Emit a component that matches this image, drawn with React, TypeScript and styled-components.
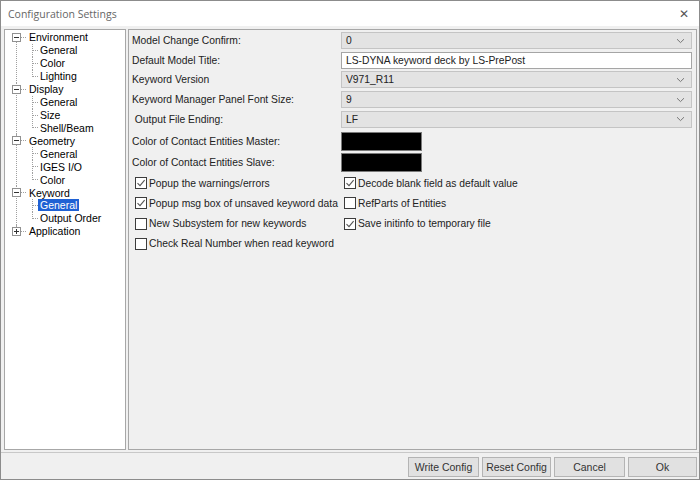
import React from 'react';
import styled, { createGlobalStyle, css } from 'styled-components';

const GlobalStyle = createGlobalStyle`
  html, body { margin: 0; padding: 0; background: #ffffff; }
  body { font-family: "Liberation Sans", Arial, sans-serif; font-size: 10.3px; color: #000; }
  * { box-sizing: border-box; }
`;

type TreeNode = { label: string; expanded: boolean; children: string[]; selected?: string };

const TREE: TreeNode[] = [
  { label: 'Environment', expanded: true, children: ['General', 'Color', 'Lighting'] },
  { label: 'Display', expanded: true, children: ['General', 'Size', 'Shell/Beam'] },
  { label: 'Geometry', expanded: true, children: ['General', 'IGES I/O', 'Color'] },
  { label: 'Keyword', expanded: true, children: ['General', 'Output Order'], selected: 'General' },
  { label: 'Application', expanded: false, children: [] },
];

const COMBOS = [
  { label: 'Model Change Confirm:', value: '0', kind: 'combo' },
  { label: 'Default Model Title:', value: 'LS-DYNA keyword deck by LS-PrePost', kind: 'text' },
  { label: 'Keyword Version', value: 'V971_R11', kind: 'combo' },
  { label: 'Keyword Manager Panel Font Size:', value: '9', kind: 'combo' },
  { label: ' Output File Ending:', value: 'LF', kind: 'combo' },
];

const CHECKS: { label: string; checked: boolean }[][] = [
  [
    { label: 'Popup the warnings/errors', checked: true },
    { label: 'Decode blank field as default value', checked: true },
  ],
  [
    { label: 'Popup msg box of unsaved keyword data', checked: true },
    { label: 'RefParts of Entities', checked: false },
  ],
  [
    { label: 'New Subsystem for new keywords', checked: false },
    { label: 'Save initinfo to temporary file', checked: true },
  ],
  [{ label: 'Check Real Number when read keyword', checked: false }],
];

const Window = styled.div`
  width: 700px;
  height: 480px;
  display: flex;
  flex-direction: column;
  border: 1px solid #8c8c8c;
  background: #f0f0f0;
  overflow: hidden;
`;

const TitleBar = styled.div`
  height: 25px;
  flex: none;
  background: #ffffff;
  display: flex;
  align-items: center;
  justify-content: space-between;
  padding: 0 8px 0 7px;
  font-family: "Open Sans", "Noto Sans", sans-serif;
  font-size: 10.5px;
  color: #666;
`;

const CloseGlyph = styled.span`
  font-size: 12px;
  color: #555;
  margin-right: 2px;
`;

const Body = styled.div`
  flex: 1;
  display: flex;
  gap: 2px;
  padding: 3px 2px 0 3px;
`;

const TreePanel = styled.div`
  width: 122px;
  height: 421px;
  background: #ffffff;
  border: 1px solid #a7a7a7;
  padding-top: 1px;
`;

const RootNode = styled.div<{ $first: boolean; $last: boolean }>`
  position: relative;
  &::before {
    content: '';
    position: absolute;
    left: 11px;
    top: ${(p) => (p.$first ? '6px' : '0')};
    ${(p) =>
      p.$last
        ? css`height: 6px;`
        : css`bottom: 0;`}
    border-left: 1px dotted #a0a0a0;
  }
`;

const RootRow = styled.div`
  height: 12.93px;
  display: flex;
  align-items: center;
  padding-left: 7px;
  position: relative;
`;

const Expander = styled.span`
  width: 9px;
  height: 9px;
  border: 1px solid #919191;
  background: #fff;
  position: relative;
  z-index: 1;
  flex: none;
  display: flex;
  align-items: center;
  justify-content: center;
`;

const Dash = styled.span`
  width: 5px;
  border-top: 1px dotted #a0a0a0;
  margin: 0 1px 0 0;
`;

const TreeText = styled.span<{ $selected?: boolean }>`
  line-height: 12px;
  padding: 0 2px;
  white-space: nowrap;
  font-size: 10.5px;
  ${(p) =>
    p.$selected &&
    css`
      background: #1f61d4;
      color: #fff;
    `}
`;

const ChildRow = styled.div<{ $last: boolean }>`
  height: 12.93px;
  display: flex;
  align-items: center;
  padding-left: 33px;
  position: relative;
  &::before {
    content: '';
    position: absolute;
    left: 27px;
    top: 0;
    height: ${(p) => (p.$last ? '7px' : '13px')};
    border-left: 1px dotted #a0a0a0;
  }
  &::after {
    content: '';
    position: absolute;
    left: 28px;
    top: 6px;
    width: 5px;
    border-top: 1px dotted #a0a0a0;
  }
`;

const SettingsPanel = styled.div`
  flex: 1;
  height: 421px;
  border: 1px solid #a7a7a7;
  padding: 2px 4px 0 3px;
  color: #222;
`;

const FormGrid = styled.div`
  display: grid;
  grid-template-columns: 209px 1fr;
  grid-auto-rows: 17.2px;
  row-gap: 2.5px;
  align-items: center;
`;

const Label = styled.span`
  white-space: pre;
`;

const Field = styled.div<{ $editable: boolean }>`
  height: 17px;
  display: flex;
  align-items: center;
  justify-content: space-between;
  padding: 0 6px 0 4px;
  border: 1px solid ${(p) => (p.$editable ? '#a5a5a5' : '#c4c4c4')};
  background: ${(p) => (p.$editable ? '#ffffff' : '#e3e3e3')};
  color: #222;
`;

const ColorGrid = styled.div`
  display: grid;
  grid-template-columns: 209px 1fr;
  grid-auto-rows: 19px;
  row-gap: 2px;
  align-items: center;
  margin-top: 4px;
`;

const Swatch = styled.div<{ $color: string }>`
  width: 81px;
  height: 19px;
  background: ${(p) => p.$color};
  border: 1px solid #7a7a7a;
`;

const CheckGrid = styled.div`
  display: grid;
  grid-template-columns: 209px 1fr;
  grid-auto-rows: 20.3px;
  align-items: center;
  margin-top: 1px;
  padding-left: 3px;
`;

const CheckItem = styled.label`
  display: flex;
  align-items: center;
  gap: 2px;
  white-space: nowrap;
`;

const Box = styled.span`
  width: 12px;
  height: 12px;
  border: 1px solid #3c3c3c;
  background: #fff;
  display: flex;
  align-items: center;
  justify-content: center;
  flex: none;
`;

const Footer = styled.div`
  height: 29px;
  flex: none;
  margin-top: 2px;
  border-top: 1px solid #c8c8c8;
  display: flex;
  justify-content: flex-end;
  align-items: center;
  gap: 3px;
  padding: 0 2px 0 0;
`;

const Button = styled.button<{ $width: number }>`
  width: ${(p) => p.$width}px;
  height: 20px;
  border: 1px solid #b4b4b4;
  background: #e1e1e1;
  font-family: "Liberation Sans", Arial, sans-serif;
  font-size: 10.5px;
  color: #333;
  padding: 0;
`;

const Check = ({ checked }: { checked: boolean }) => (
  <Box>
    {checked && (
      <svg width="10" height="10" viewBox="0 0 10 10">
        <path d="M1.5 5.2 L4 7.6 L8.6 2.2" fill="none" stroke="#555" strokeWidth="1.1" />
      </svg>
    )}
  </Box>
);

const Chevron = () => (
  <svg width="9" height="6" viewBox="0 0 9 6">
    <path d="M1 1.2 L4.5 4.6 L8 1.2" fill="none" stroke="#777" strokeWidth="1" />
  </svg>
);

const ExpandIcon = ({ expanded }: { expanded: boolean }) => (
  <Expander>
    <svg width="7" height="7" viewBox="0 0 7 7">
      <path d="M1 3.5 H6" stroke="#333" strokeWidth="1" />
      {!expanded && <path d="M3.5 1 V6" stroke="#333" strokeWidth="1" />}
    </svg>
  </Expander>
);

const App = () => {
  return (
    <>
      <GlobalStyle />
      <Window>
        <TitleBar>
          <span>Configuration Settings</span>
          <CloseGlyph>✕</CloseGlyph>
        </TitleBar>
        <Body>
          <TreePanel>
            {TREE.map((node, i) => (
              <RootNode key={node.label} $first={i === 0} $last={i === TREE.length - 1}>
                <RootRow>
                  <ExpandIcon expanded={node.expanded} />
                  <Dash />
                  <TreeText>{node.label}</TreeText>
                </RootRow>
                {node.children.map((child, j) => (
                  <ChildRow key={child} $last={j === node.children.length - 1}>
                    <TreeText $selected={node.selected === child}>{child}</TreeText>
                  </ChildRow>
                ))}
              </RootNode>
            ))}
          </TreePanel>
          <SettingsPanel>
            <FormGrid>
              {COMBOS.map((row) => (
                <React.Fragment key={row.label}>
                  <Label>{row.label}</Label>
                  <Field $editable={row.kind === 'text'}>
                    <span>{row.value}</span>
                    {row.kind === 'combo' && <Chevron />}
                  </Field>
                </React.Fragment>
              ))}
            </FormGrid>
            <ColorGrid>
              <Label>Color of Contact Entities Master:</Label>
              <Swatch $color="#000000" />
              <Label>Color of Contact Entities Slave:</Label>
              <Swatch $color="#000000" />
            </ColorGrid>
            <CheckGrid>
              {CHECKS.flat().map((c) => (
                <CheckItem key={c.label}>
                  <Check checked={c.checked} />
                  <span>{c.label}</span>
                </CheckItem>
              ))}
            </CheckGrid>
          </SettingsPanel>
        </Body>
        <Footer>
          <Button $width={71}>Write Config</Button>
          <Button $width={69}>Reset Config</Button>
          <Button $width={71}>Cancel</Button>
          <Button $width={69}>Ok</Button>
        </Footer>
      </Window>
    </>
  );
};

export default App;
